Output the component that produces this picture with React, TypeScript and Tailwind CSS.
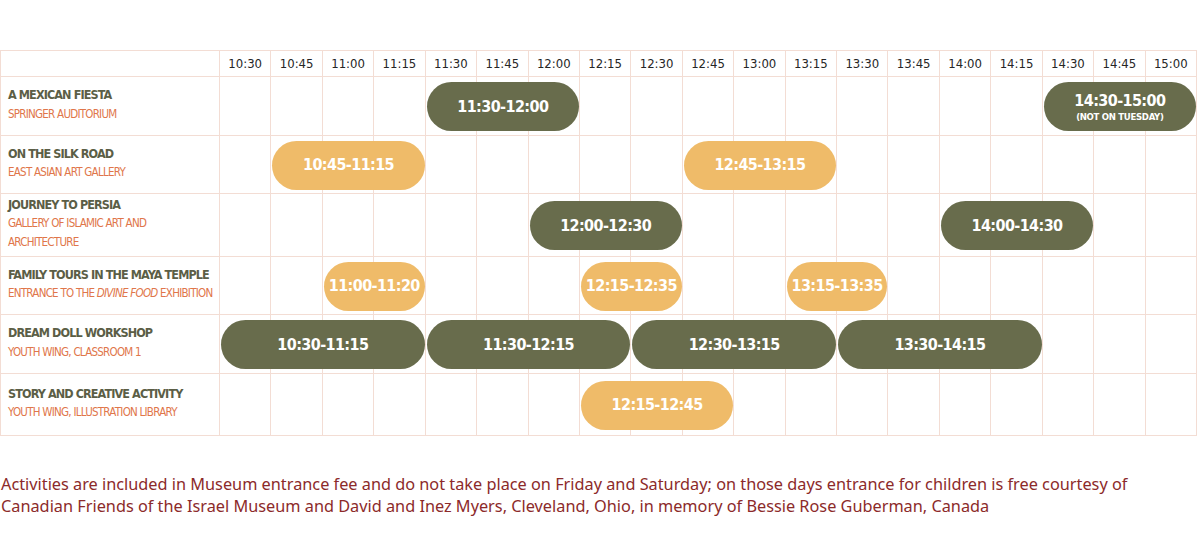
const times = [
  '10:30', '10:45', '11:00', '11:15', '11:30', '11:45', '12:00', '12:15', '12:30', '12:45',
  '13:00', '13:15', '13:30', '13:45', '14:00', '14:15', '14:30', '14:45', '15:00',
];

// one explicit column class per time slot so the grid never auto-places into extra columns
const cols = [
  'col-start-2', 'col-start-3', 'col-start-4', 'col-start-5', 'col-start-6', 'col-start-7',
  'col-start-8', 'col-start-9', 'col-start-10', 'col-start-11', 'col-start-12', 'col-start-13',
  'col-start-14', 'col-start-15', 'col-start-16', 'col-start-17', 'col-start-18', 'col-start-19',
  'col-start-20',
];

const rows = [
  { title: 'A MEXICAN FIESTA', place: <>SPRINGER AUDITORIUM</>, row: 'row-start-2' },
  { title: 'ON THE SILK ROAD', place: <>EAST ASIAN ART GALLERY</>, row: 'row-start-3' },
  { title: 'JOURNEY TO PERSIA', place: <>GALLERY OF ISLAMIC ART AND<br />ARCHITECTURE</>, row: 'row-start-4' },
  {
    title: 'FAMILY TOURS IN THE MAYA TEMPLE',
    place: <>ENTRANCE TO THE <i>DIVINE FOOD</i> EXHIBITION</>,
    row: 'row-start-5',
  },
  { title: 'DREAM DOLL WORKSHOP', place: <>YOUTH WING, CLASSROOM 1</>, row: 'row-start-6' },
  { title: 'STORY AND CREATIVE ACTIVITY', place: <>YOUTH WING, ILLUSTRATION LIBRARY</>, row: 'row-start-7' },
];

const olive = 'bg-[#686c4c]';
const gold = 'bg-[#efbb69]';

const slots = [
  { label: '11:30-12:00', pos: 'row-start-2 col-start-6 col-span-3', color: olive },
  { label: '14:30-15:00', note: '(NOT ON TUESDAY)', pos: 'row-start-2 col-start-18 col-span-3', color: olive },
  { label: '10:45-11:15', pos: 'row-start-3 col-start-3 col-span-3', color: gold },
  { label: '12:45-13:15', pos: 'row-start-3 col-start-11 col-span-3', color: gold },
  { label: '12:00-12:30', pos: 'row-start-4 col-start-8 col-span-3', color: olive },
  { label: '14:00-14:30', pos: 'row-start-4 col-start-16 col-span-3', color: olive },
  { label: '11:00-11:20', pos: 'row-start-5 col-start-4 col-span-2', color: gold },
  { label: '12:15-12:35', pos: 'row-start-5 col-start-9 col-span-2', color: gold },
  { label: '13:15-13:35', pos: 'row-start-5 col-start-13 col-span-2', color: gold },
  { label: '10:30-11:15', pos: 'row-start-6 col-start-2 col-span-4', color: olive },
  { label: '11:30-12:15', pos: 'row-start-6 col-start-6 col-span-4', color: olive },
  { label: '12:30-13:15', pos: 'row-start-6 col-start-10 col-span-4', color: olive },
  { label: '13:30-14:15', pos: 'row-start-6 col-start-14 col-span-4', color: olive },
  { label: '12:15-12:45', pos: 'row-start-7 col-start-9 col-span-3', color: gold },
];

const narrow = 'font-["Liberation_Sans_Narrow","DejaVu_Sans",sans-serif] font-stretch-condensed';

export default function App() {
  return (
    <div className="w-[1200px] h-[547px] bg-white pt-[50px]">
      <div
        className={`grid w-[1197px] grid-cols-[219px_repeat(19,minmax(0,1fr))] grid-rows-[26px_59px_58px_63px_58px_59px_62px] border-l border-t border-[#f3ddd4] ${narrow}`}
      >
        {/* header */}
        <div className="row-start-1 col-start-1 border-r border-b border-[#f3ddd4]" />
        {times.map((t, i) => (
          <div
            key={t}
            className={`row-start-1 ${cols[i]} flex items-center justify-center border-r border-b border-[#f3ddd4] text-[13px] text-[#262626]`}
          >
            {t}
          </div>
        ))}

        {/* rows: label + empty cells */}
        {rows.map((r) => [
          <div
            key={r.title}
            className={`${r.row} col-start-1 flex flex-col justify-center whitespace-nowrap border-r border-b border-[#f3ddd4] pb-[3px] pl-[7px] leading-[18.5px]`}
          >
            <div className="text-[12.5px] font-bold tracking-[-0.9px] text-[#5b5e46]">{r.title}</div>
            <div className="text-[11.5px] tracking-[-0.75px] text-[#e0764a]">{r.place}</div>
          </div>,
          ...times.map((t, i) => (
            <div key={r.title + t} className={`${r.row} ${cols[i]} border-r border-b border-[#f3ddd4]`} />
          )),
        ])}

        {/* sessions */}
        {slots.map((s) => (
          <div
            key={s.label + s.pos}
            className={`${s.pos} ${s.color} z-10 mx-px flex h-[49px] flex-col items-center justify-center self-center whitespace-nowrap rounded-full text-white`}
          >
            <span className="text-[16px] font-bold leading-[20px] tracking-[-0.6px]">{s.label}</span>
            {s.note && <span className="text-[9.5px] font-bold leading-[11px] tracking-[-0.3px]">{s.note}</span>}
          </div>
        ))}
      </div>

      <p className="mt-[37px] pl-[1px] font-['Source_Sans_Pro','Noto_Sans',sans-serif] text-[16.3px] leading-[22px] text-[#8c2a2a]">
        Activities are included in Museum entrance fee and do not take place on Friday and Saturday; on those days entrance for children is free courtesy of
        <br />
        Canadian Friends of the Israel Museum and David and Inez Myers, Cleveland, Ohio, in memory of Bessie Rose Guberman, Canada
      </p>
    </div>
  );
}
